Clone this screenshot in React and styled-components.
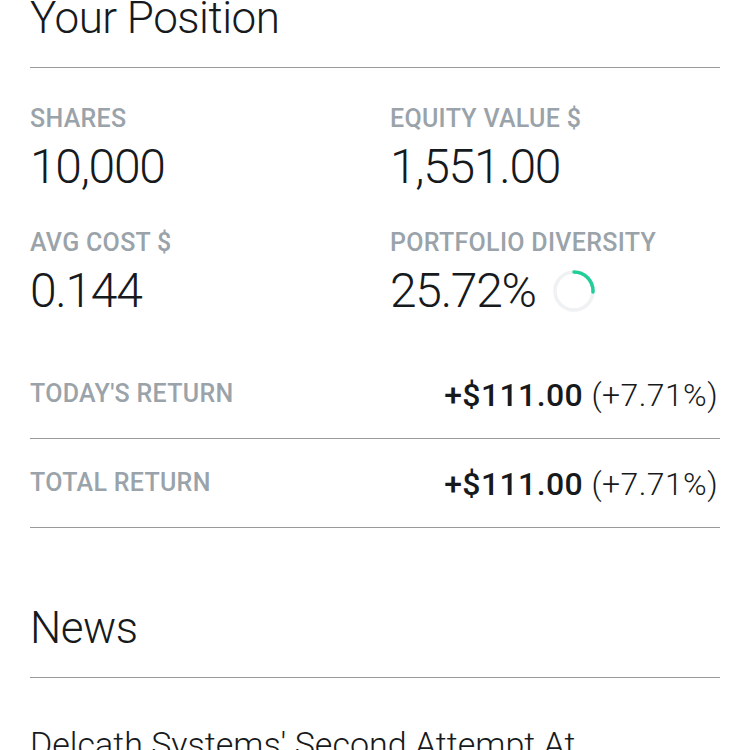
import React from "react";
import styled, { createGlobalStyle } from "styled-components";

const Global = createGlobalStyle`
  html, body { margin: 0; padding: 0; background: #ffffff; }
  body { font-family: Roboto, "Noto Sans", sans-serif; color: #171a1d; overflow: hidden; }
`;

const Page = styled.div`
  padding: 0 30px;
  height: 750px;
  overflow: hidden;
`;

const SectionTitle = styled.h2`
  margin: ${(p) => p.$top}px 0 0;
  padding-bottom: 27px;
  border-bottom: 1px solid #9a9a9a;
  font-size: 44px;
  line-height: 44px;
  font-weight: 300;
  letter-spacing: -0.5px;
  color: #171a1d;
`;

const StatsGrid = styled.div`
  display: grid;
  grid-template-columns: 360px 1fr;
  row-gap: 39px;
  padding-top: 38px;
`;

const Stat = styled.div`
  display: flex;
  flex-direction: column;
  gap: 11px;
`;

const Label = styled.div`
  font-size: 25px;
  line-height: 26px;
  font-weight: 500;
  color: #9aa3a9;
  letter-spacing: 0.3px;
`;

const ValueLine = styled.div`
  display: flex;
  align-items: center;
  gap: 17px;
  height: 48px;
`;

const Value = styled.div`
  font-size: 48px;
  line-height: 48px;
  font-weight: 300;
  letter-spacing: -1.3px;
  color: #171a1d;
`;

const Returns = styled.div`
  margin-top: 35px;
`;

const ReturnRow = styled.div`
  display: flex;
  align-items: center;
  justify-content: space-between;
  height: 88px;
  border-bottom: 1px solid #9a9a9a;
`;

const ReturnValue = styled.div`
  font-size: 32px;
  line-height: 32px;
  letter-spacing: 0.4px;
  color: #171a1d;
  padding-right: 2px;
  padding-top: 2px;
`;

const Strong = styled.span`
  font-weight: 500;
`;

const Plain = styled.span`
  font-weight: 300;
`;

const Headline = styled.div`
  margin-top: 44px;
  font-size: 34px;
  line-height: 44px;
  font-weight: 300;
  color: #171a1d;
`;

function Ring({ percent }) {
  const r = 19;
  const c = 2 * Math.PI * r;
  return (
    <svg width="42" height="42" viewBox="0 0 42 42">
      <circle cx="21" cy="21" r={r} fill="none" stroke="#f0f1f3" strokeWidth="3.5" />
      <circle
        cx="21"
        cy="21"
        r={r}
        fill="none"
        stroke="#21ce99"
        strokeWidth="3.5"
        strokeLinecap="round"
        strokeDasharray={`${(c * percent) / 100} ${c}`}
        transform="rotate(-90 21 21)"
      />
    </svg>
  );
}

const stats = [
  { label: "SHARES", value: "10,000" },
  { label: "EQUITY VALUE $", value: "1,551.00" },
  { label: "AVG COST $", value: "0.144" },
  { label: "PORTFOLIO DIVERSITY", value: "25.72%", ring: 25.72 },
];

const returns = [
  { label: "TODAY'S RETURN", amount: "+$111.00", pct: "(+7.71%)" },
  { label: "TOTAL RETURN", amount: "+$111.00", pct: "(+7.71%)" },
];

export default function App() {
  return (
    <>
      <Global />
      <Page>
        <SectionTitle $top={-4}>Your Position</SectionTitle>
        <StatsGrid>
          {stats.map((s) => (
            <Stat key={s.label}>
              <Label>{s.label}</Label>
              <ValueLine>
                <Value>{s.value}</Value>
                {s.ring != null && <Ring percent={s.ring} />}
              </ValueLine>
            </Stat>
          ))}
        </StatsGrid>
        <Returns>
          {returns.map((r) => (
            <ReturnRow key={r.label}>
              <Label>{r.label}</Label>
              <ReturnValue>
                <Strong>{r.amount}</Strong> <Plain>{r.pct}</Plain>
              </ReturnValue>
            </ReturnRow>
          ))}
        </Returns>
        <SectionTitle $top={78}>News</SectionTitle>
        <Headline>Delcath Systems' Second Attempt At</Headline>
      </Page>
    </>
  );
}
